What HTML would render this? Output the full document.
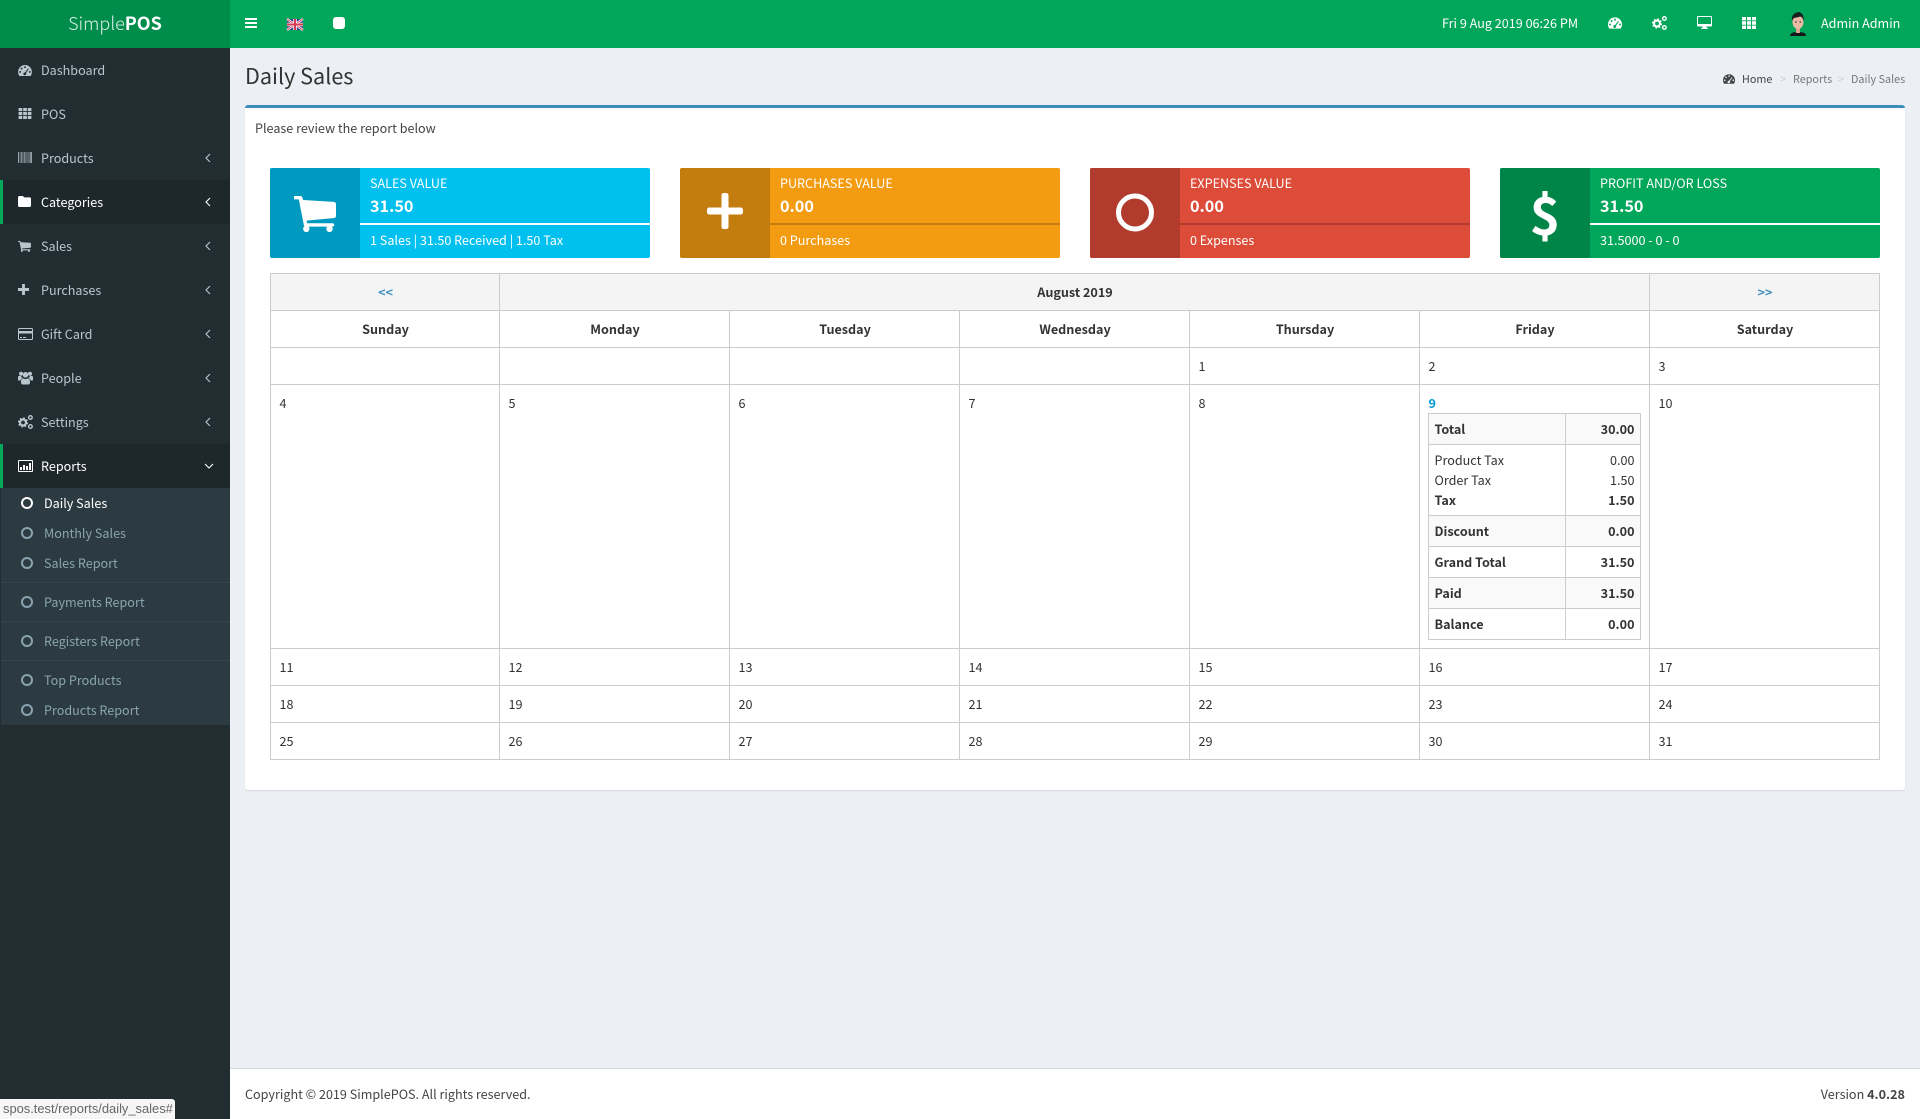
<!DOCTYPE html>
<html lang="en"><head><meta charset="utf-8"><title>Daily Sales</title>
<style>
html,body{margin:0;padding:0;width:1920px;height:1119px;overflow:hidden;background:#ecf0f5;font-family:"Noto Sans CJK SC","Liberation Sans",sans-serif;font-size:12.6px;color:#333}
.a{position:absolute}
.t{position:absolute;white-space:nowrap;line-height:20px}
svg{position:absolute;display:block;overflow:visible}
.s{color:#b8c7ce}.w{color:#fff}.u{color:#8aa4af}
.box{position:absolute;top:168px;width:380px;height:90px;border-radius:2px;overflow:hidden;color:#fff}
.box .ic{position:absolute;left:0;top:0;width:90px;height:90px}
.box .dv{position:absolute;left:90px;right:0;top:55px;height:2px}
.box .t{left:100px}
table{border-collapse:collapse;table-layout:fixed;position:absolute}
.cal{left:269.5px;top:272.5px;width:1610px}
.cal td,.cal th{border:1px solid #ccc;padding:8px 7px 8px 9px;line-height:20px;height:20px;text-align:left;vertical-align:top;font-weight:400;overflow:hidden}
.cal th{font-weight:700;text-align:center}
.cal .h{background:#f4f4f4}
.cal a{color:#3c8dbc;text-decoration:none}
.mini{left:1427.5px;top:412.5px;width:212px}
.cal .mini td,.mini td{border:1px solid #ccc;padding:5px 5px 5px 6px;line-height:20px;vertical-align:top}
.mini td+td{text-align:right}
.mini b{font-weight:700}
.mini .g td{background:#f9f9f9}
</style></head><body>
<svg width="0" height="0" style="position:absolute">
<defs>
<symbol id="dash" viewBox="0 0 15 12"><path fill-rule="evenodd" d="M7.500 0C3.400 0 0 3.300 0 7.500c0 1.700.5 3.200 1.400 4.500h12.200c.9-1.300 1.400-2.800 1.400-4.500C15 3.300 11.600 0 7.500 0zM7.500 1.300a1 1 0 1 1 0 2.100 1 1 0 0 1 0-2.100zM3.800 2.800a1 1 0 1 1 0 2.100 1 1 0 0 1 0-2.100zM2.200 6.500a1 1 0 1 1 0 2.100 1 1 0 0 1 0-2.100zM12.800 6.500a1 1 0 1 1 0 2.100 1 1 0 0 1 0-2.100zM10.900 3.700l.8.500-3 4.600c.3.700.2 1.500-.3 2-.6.600-1.700.600-2.300 0s-.6-1.600 0-2.200c.4-.4.900-.5 1.500-.4z"/></symbol>
<symbol id="th" viewBox="0 0 14 12"><path d="M0 0h4v3.400H0zM5 0h4v3.400H5zM10 0h4v3.400h-4zM0 4.300h4v3.400H0zM5 4.300h4v3.400H5zM10 4.300h4v3.400h-4zM0 8.600h4V12H0zM5 8.600h4V12H5zM10 8.600h4V12h-4z"/></symbol>
<symbol id="bar" viewBox="0 0 14 11"><path d="M0 0h1v11H0zM1.700 0h.5v11h-.5zM2.800 0h1v11h-1zM4.500 0h.5v11h-.5zM5.600 0h1.200v11H5.600zM7.400 0h.5v11h-.5zM8.500 0h.9v11h-.9zM10 0h.5v11H10zM11 0h.5v11H11zM12.200 0H14v11h-1.800z" opacity=".75"/></symbol>
<symbol id="folder" viewBox="0 0 13 11"><path d="M1.400 0h3c.8 0 1.400.6 1.400 1.400h5.800c.8 0 1.400.6 1.400 1.400v6.800c0 .8-.6 1.400-1.400 1.400H1.400C.6 11 0 10.400 0 9.600V1.400C0 .6.600 0 1.400 0z"/></symbol>
<symbol id="cart" viewBox="0 0 42 36"><path d="M0 0h6.200c1.200 0 1.900.6 2.200 1.700L9.200 4l30.800 1.900c1.200.1 2 1 2 2.200v11.800c0 1-.7 1.900-1.700 2.100L12.600 24.600l.5 2.600h25.500c1 0 1.700.8 1.700 1.700s-.7 1.700-1.700 1.700H11.600c-.9 0-1.500-.5-1.700-1.400L4.800 3.400H0z"/><circle cx="12.300" cy="32.800" r="3.200"/><circle cx="35.500" cy="32.800" r="3.200"/></symbol>
<symbol id="plus" viewBox="0 0 13 13"><path d="M4.800 0h3.400v4.800H13v3.400H8.200V13H4.800V8.200H0V4.800h4.800z"/></symbol>
<symbol id="card" viewBox="0 0 15 12"><path fill-rule="evenodd" d="M1.300 0h12.400C14.400 0 15 .6 15 1.300v9.400c0 .7-.6 1.300-1.300 1.300H1.300C.6 12 0 11.400 0 10.700V1.300C0 .6.600 0 1.300 0zM1 1.300V3h13V1.300c0-.2-.1-.3-.3-.3H1.300c-.2 0-.3.100-.3.300zM1 5.500v5.200c0 .2.100.3.300.3h12.400c.2 0 .3-.1.300-.3V5.500zM2 9h2v1H2zM5 9h3v1H5z"/></symbol>
<symbol id="users" viewBox="0 0 15 13"><circle cx="3" cy="2.300" r="2"/><circle cx="12" cy="2.300" r="2"/><circle cx="7.500" cy="3.300" r="2.800"/><path d="M0 5.500c0-.6.400-1 1-1h2c.3.800.8 1.500 1.500 1.900C3.400 7 2.600 8 2.500 9H.8C.3 9 0 8.700 0 8.200zM15 5.500c0-.6-.4-1-1-1h-2c-.3.800-.8 1.500-1.500 1.900 1.100.6 1.900 1.600 2 2.600h1.700c.5 0 .8-.3.800-.8zM5 6.700c1.500 1 3.500 1 5 0 1.500.4 2 1.800 2 3.700v.9c0 1-.7 1.700-1.800 1.700H4.800C3.700 13 3 12.300 3 11.300v-.9c0-1.900.5-3.300 2-3.700z"/></symbol>
<symbol id="cogs" viewBox="0 0 15 14"><circle cx="5" cy="7.500" r="3" fill="none" stroke="currentColor" stroke-width="2.200"/><circle cx="5" cy="7.500" r="4.300" fill="none" stroke="currentColor" stroke-width="1.600" stroke-dasharray="1.700 1.680"/><circle cx="12.400" cy="2.500" r="1.800" fill="none" stroke="currentColor" stroke-width="1.400"/><circle cx="12.400" cy="11.500" r="1.800" fill="none" stroke="currentColor" stroke-width="1.400"/></symbol>
<symbol id="chart" viewBox="0 0 15 12"><path fill-rule="evenodd" d="M1 0h13c.6 0 1 .4 1 1v10c0 .6-.4 1-1 1H1c-.6 0-1-.4-1-1V1c0-.6.400-1 1-1zm0 1v10h13V1zM2 7h2v3H2zM5 5h2v5H5zM8 6h2v4H8zM11 3h2v7h-2z"/></symbol>
<symbol id="desk" viewBox="0 0 15 13"><path fill-rule="evenodd" d="M1 0h13c.6 0 1 .4 1 1v8.500c0 .6-.4 1-1 1H9.500v1.300h1.300V13H4.200v-1.200h1.300v-1.300H1c-.6 0-1-.4-1-1V1c0-.6.400-1 1-1zm0 1v7h13V1z"/></symbol>
<symbol id="o" viewBox="0 0 12 12"><circle cx="6" cy="6" r="5" fill="none" stroke="currentColor" stroke-width="2"/></symbol>
<symbol id="l" viewBox="0 0 6 10"><path d="M5 1L1 5l4 4" fill="none" stroke="currentColor" stroke-width="1.100"/></symbol>
<symbol id="d" viewBox="0 0 10 6"><path d="M1 1l4 4 4-4" fill="none" stroke="currentColor" stroke-width="1.100"/></symbol>
</defs></svg>

<!-- header -->
<div class="a" style="left:0;top:0;width:1920px;height:48px;background:#00a65a"></div>
<div class="a" style="left:0;top:0;width:230px;height:48px;background:#008d4c"></div>
<div class="t w" style="left:0;width:230px;text-align:center;top:8px;font-size:18px;line-height:30px"><span style="font-weight:300;opacity:.85">Simple</span><b>POS</b></div>
<div class="a" style="left:245px;top:18px;width:12px;height:2px;background:#fff"></div>
<div class="a" style="left:245px;top:22px;width:12px;height:2px;background:#fff"></div>
<div class="a" style="left:245px;top:26px;width:12px;height:2px;background:#fff"></div>
<svg style="left:287px;top:19px" width="16" height="11" viewBox="0 0 16 11"><rect width="16" height="11" fill="#2b3f8c"/><path d="M0 0L16 11M16 0L0 11" stroke="#f3eef3" stroke-width="2.400"/><path d="M0 0L16 11M16 0L0 11" stroke="#d9455a" stroke-width=".8"/><path d="M8 0v11M0 5.500h16" stroke="#f3eef3" stroke-width="3.600"/><path d="M8 0v11M0 5.500h16" stroke="#d93b52" stroke-width="2"/></svg>
<div class="a" style="left:333px;top:17px;width:12px;height:12px;background:#fff;border-radius:3px"></div>
<div class="t w" style="left:1442px;top:13px">Fri 9 Aug 2019 06:26 PM</div>
<svg style="left:1608px;top:17px;color:#fff;fill:#fff" width="14" height="12"><use href="#dash"/></svg>
<svg style="left:1652px;top:16px;color:#fff" width="15" height="14"><use href="#cogs"/></svg>
<svg style="left:1697px;top:16px;fill:#fff" width="15" height="13"><use href="#desk"/></svg>
<svg style="left:1742px;top:17px;fill:#fff" width="14" height="12"><use href="#th"/></svg>
<svg style="left:1788px;top:12px" width="20" height="24" viewBox="0 0 20 24"><path d="M2 24c0-3 3-4 8-4s8 1 8 4z" fill="#13191a"/><rect x="8" y="14" width="4" height="7" fill="#d9a590"/><ellipse cx="10" cy="10" rx="5.500" ry="7" fill="#eab9a4"/><path d="M4 9C3 3 7 0 12 0c-1 1 3 1 3 4 1 2 1 3 0.500 5-.5-3-1.500-4-3.500-4.500-2 1-5 1-6 1.500C5 7 4.500 8 4 9z" fill="#15201f"/><circle cx="7.800" cy="10" r=".8" fill="#333"/><circle cx="12.200" cy="10" r=".8" fill="#333"/></svg>
<div class="t w" style="left:1821px;top:13px">Admin Admin</div>

<!-- sidebar -->
<div class="a" style="left:0;top:48px;width:230px;height:1071px;background:#222d32"></div>
<div class="a" style="left:0;top:180px;width:230px;height:44px;background:#1e282c"></div>
<div class="a" style="left:0;top:180px;width:3px;height:44px;background:#00a65a"></div>
<div class="a" style="left:0;top:444px;width:230px;height:44px;background:#1e282c"></div>
<div class="a" style="left:0;top:444px;width:3px;height:44px;background:#00a65a"></div>
<div class="a" style="left:1px;top:488px;width:229px;height:237px;background:#2c3b41"></div>
<div class="a" style="left:1px;top:582px;width:229px;height:1px;background:#33444c"></div>
<div class="a" style="left:1px;top:621px;width:229px;height:1px;background:#33444c"></div>
<div class="a" style="left:1px;top:660px;width:229px;height:1px;background:#33444c"></div>

<svg style="left:18px;top:65px;fill:#b8c7ce" width="14" height="11"><use href="#dash"/></svg><div class="t s" style="left:41px;top:60px">Dashboard</div>
<svg style="left:18px;top:108px;fill:#b8c7ce" width="14" height="11"><use href="#th"/></svg><div class="t s" style="left:41px;top:104px">POS</div>
<svg style="left:18px;top:152px;fill:#b8c7ce" width="14" height="11"><use href="#bar"/></svg><div class="t s" style="left:41px;top:148px">Products</div>
<svg style="left:18px;top:196px;fill:#fff" width="13" height="11"><use href="#folder"/></svg><div class="t w" style="left:41px;top:192px">Categories</div>
<svg style="left:18px;top:241px;fill:#b8c7ce" width="13" height="11"><use href="#cart"/></svg><div class="t s" style="left:41px;top:236px">Sales</div>
<svg style="left:18px;top:284px;fill:#b8c7ce" width="11" height="11"><use href="#plus"/></svg><div class="t s" style="left:41px;top:280px">Purchases</div>
<svg style="left:18px;top:328px;fill:#b8c7ce" width="15" height="12"><use href="#card"/></svg><div class="t s" style="left:41px;top:324px">Gift Card</div>
<svg style="left:18px;top:371px;fill:#b8c7ce" width="15" height="14"><use href="#users"/></svg><div class="t s" style="left:41px;top:368px">People</div>
<svg style="left:18px;top:415px;color:#b8c7ce" width="15" height="14"><use href="#cogs"/></svg><div class="t s" style="left:41px;top:412px">Settings</div>
<svg style="left:18px;top:460px;fill:#fff" width="15" height="12"><use href="#chart"/></svg><div class="t w" style="left:41px;top:456px">Reports</div>

<svg style="left:205px;top:153px;color:#b8c7ce" width="6" height="10"><use href="#l"/></svg>
<svg style="left:205px;top:197px;color:#fff" width="6" height="10"><use href="#l"/></svg>
<svg style="left:205px;top:241px;color:#b8c7ce" width="6" height="10"><use href="#l"/></svg>
<svg style="left:205px;top:285px;color:#b8c7ce" width="6" height="10"><use href="#l"/></svg>
<svg style="left:205px;top:329px;color:#b8c7ce" width="6" height="10"><use href="#l"/></svg>
<svg style="left:205px;top:373px;color:#b8c7ce" width="6" height="10"><use href="#l"/></svg>
<svg style="left:205px;top:417px;color:#b8c7ce" width="6" height="10"><use href="#l"/></svg>
<svg style="left:204px;top:463px;color:#fff" width="10" height="6"><use href="#d"/></svg>

<svg style="left:21px;top:497px;color:#fff" width="12" height="12"><use href="#o"/></svg><div class="t w" style="left:44px;top:493px">Daily Sales</div>
<svg style="left:21px;top:527px;color:#8aa4af" width="12" height="12"><use href="#o"/></svg><div class="t u" style="left:44px;top:523px">Monthly Sales</div>
<svg style="left:21px;top:557px;color:#8aa4af" width="12" height="12"><use href="#o"/></svg><div class="t u" style="left:44px;top:553px">Sales Report</div>
<svg style="left:21px;top:596px;color:#8aa4af" width="12" height="12"><use href="#o"/></svg><div class="t u" style="left:44px;top:592px">Payments Report</div>
<svg style="left:21px;top:635px;color:#8aa4af" width="12" height="12"><use href="#o"/></svg><div class="t u" style="left:44px;top:631px">Registers Report</div>
<svg style="left:21px;top:674px;color:#8aa4af" width="12" height="12"><use href="#o"/></svg><div class="t u" style="left:44px;top:670px">Top Products</div>
<svg style="left:21px;top:704px;color:#8aa4af" width="12" height="12"><use href="#o"/></svg><div class="t u" style="left:44px;top:700px">Products Report</div>

<!-- title -->
<div class="t" style="left:245px;top:60px;font-size:21.600px;line-height:32px">Daily Sales</div>
<svg style="left:1723px;top:74px;fill:#444" width="12" height="10"><use href="#dash"/></svg>
<div class="t" style="left:1742px;top:69px;font-size:10.800px;color:#444">Home</div>
<div class="t" style="left:1780px;top:69px;font-size:10.800px;color:#ccc">&gt;</div>
<div class="t" style="left:1793px;top:69px;font-size:10.800px;color:#777">Reports</div>
<div class="t" style="left:1838px;top:69px;font-size:10.800px;color:#ccc">&gt;</div>
<div class="t" style="left:1851px;top:69px;font-size:10.800px;color:#777">Daily Sales</div>

<!-- box -->
<div class="a" style="left:245px;top:105px;width:1660px;height:685px;background:#fff;border-top:3px solid #3c8dbc;border-radius:3px;box-sizing:border-box;box-shadow:0 1px 1px rgba(0,0,0,.1)"></div>
<div class="t" style="left:255px;top:118px;color:#444">Please review the report below</div>

<div class="box" style="left:270px;background:#00c0ef">
 <div class="ic" style="background:#009ac0"><svg style="left:24px;top:28px;fill:#fff" width="42" height="36"><use href="#cart"/></svg></div>
 <div class="dv" style="background:#fff"></div>
 <div class="t" style="top:5px">SALES VALUE</div><div class="t" style="top:27px;font-size:16.200px;font-weight:700">31.50</div><div class="t" style="top:62px">1 Sales | 31.50 Received | 1.50 Tax</div>
</div>
<div class="box" style="left:680px;background:#f39c12">
 <div class="ic" style="background:#c27d0e"><svg style="left:27px;top:25px;fill:#fff" width="36" height="36" viewBox="0 0 36 36"><path d="M14.500 2.500C14.500 1 15.500 0 17 0h2c1.500 0 2.500 1 2.500 2.500v12h12C35 14.500 36 15.500 36 17v2c0 1.500-1 2.500-2.500 2.500h-12v12c0 1.500-1 2.500-2.500 2.500h-2c-1.500 0-2.500-1-2.500-2.500v-12h-12C1 21.500 0 20.500 0 19v-2c0-1.500 1-2.500 2.500-2.500h12z"/></svg></div>
 <div class="dv" style="background:#c27d0e"></div>
 <div class="t" style="top:5px">PURCHASES VALUE</div><div class="t" style="top:27px;font-size:16.200px;font-weight:700">0.00</div><div class="t" style="top:62px">0 Purchases</div>
</div>
<div class="box" style="left:1090px;background:#dd4b39">
 <div class="ic" style="background:#b13c2e"><svg style="left:26px;top:25px" width="38" height="39" viewBox="0 0 38 39"><circle cx="19" cy="19.500" r="16.500" fill="none" stroke="#fff" stroke-width="5"/></svg></div>
 <div class="dv" style="background:#b13c2e"></div>
 <div class="t" style="top:5px">EXPENSES VALUE</div><div class="t" style="top:27px;font-size:16.200px;font-weight:700">0.00</div><div class="t" style="top:62px">0 Expenses</div>
</div>
<div class="box" style="left:1500px;background:#00a65a">
 <div class="ic" style="background:#008548"><div class="t" style="left:0;width:90px;text-align:center;top:10px;font-size:52px;line-height:70px;font-weight:700">$</div></div>
 <div class="dv" style="background:#fff"></div>
 <div class="t" style="top:5px">PROFIT AND/OR LOSS</div><div class="t" style="top:27px;font-size:16.200px;font-weight:700">31.50</div><div class="t" style="top:62px">31.5000 - 0 - 0</div>
</div>

<!-- calendar -->
<table class="cal">
<colgroup><col style="width:229px"><col style="width:230px"><col style="width:230px"><col style="width:230px"><col style="width:230px"><col style="width:230px"><col style="width:230px"></colgroup>
<tr><th class="h"><a href="#">&lt;&lt;</a></th><th class="h" colspan="5">August 2019</th><th class="h"><a href="#">&gt;&gt;</a></th></tr>
<tr><th>Sunday</th><th>Monday</th><th>Tuesday</th><th>Wednesday</th><th>Thursday</th><th>Friday</th><th>Saturday</th></tr>
<tr><td></td><td></td><td></td><td></td><td>1</td><td>2</td><td>3</td></tr>
<tr style="height:264px"><td>4</td><td>5</td><td>6</td><td>7</td><td>8</td><td><b style="color:#0099d6">9</b></td><td>10</td></tr>
<tr><td>11</td><td>12</td><td>13</td><td>14</td><td>15</td><td>16</td><td>17</td></tr>
<tr><td>18</td><td>19</td><td>20</td><td>21</td><td>22</td><td>23</td><td>24</td></tr>
<tr><td>25</td><td>26</td><td>27</td><td>28</td><td>29</td><td>30</td><td>31</td></tr>
</table>
<table class="mini">
<colgroup><col style="width:137px"><col style="width:75px"></colgroup>
<tr class="g"><td><b>Total</b></td><td><b>30.00</b></td></tr>
<tr><td>Product Tax<br>Order Tax<br><b>Tax</b></td><td>0.00<br>1.50<br><b>1.50</b></td></tr>
<tr class="g"><td><b>Discount</b></td><td><b>0.00</b></td></tr>
<tr><td><b>Grand Total</b></td><td><b>31.50</b></td></tr>
<tr class="g"><td><b>Paid</b></td><td><b>31.50</b></td></tr>
<tr><td><b>Balance</b></td><td><b>0.00</b></td></tr>
</table>

<!-- footer -->
<div class="a" style="left:230px;top:1068px;width:1690px;height:51px;background:#fff;border-top:1px solid #d2d6de;box-sizing:border-box"></div>
<div class="t" style="left:245px;top:1084px;color:#444">Copyright © 2019 SimplePOS. All rights reserved.</div>
<div class="t" style="right:15px;top:1084px;color:#444">Version <b>4.0.28</b></div>

<!-- status -->
<div class="a" style="left:0;top:1099px;width:175px;height:20px;background:#f6f6f6;border-top-right-radius:3px"></div>
<div class="t" style="left:3px;top:1099px;font-size:12.900px;color:#666;font-family:'Liberation Sans',sans-serif">spos.test/reports/daily_sales#</div>
</body></html>
